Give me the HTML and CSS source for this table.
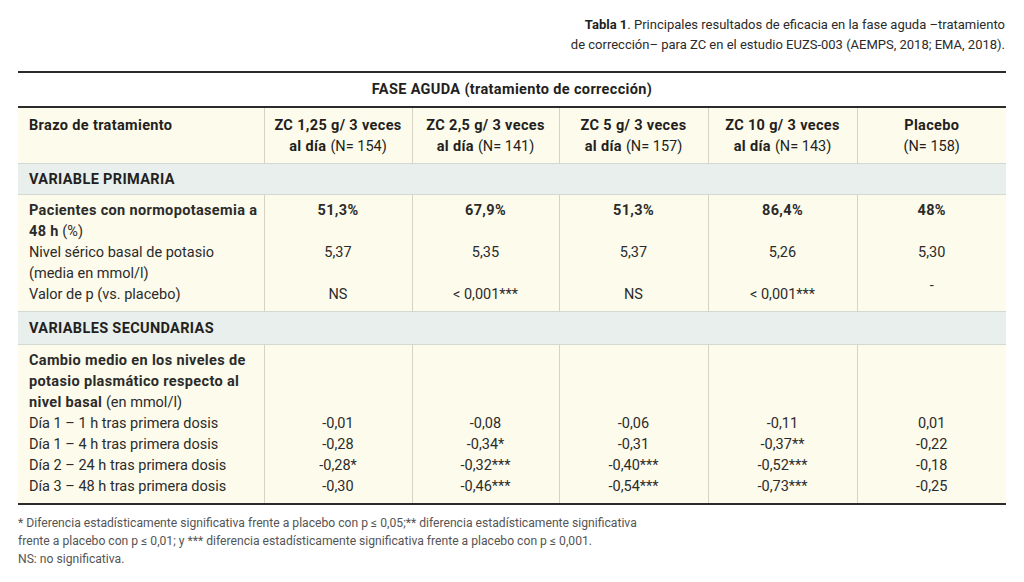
FILE: index.html
```html
<!DOCTYPE html>
<html lang="es">
<head>
<meta charset="utf-8">
<title>Tabla 1</title>
<link rel="stylesheet" href="styles.css">
</head>
<body>
<div class="page">
  <p class="caption"><b>Tabla 1</b>. Principales resultados de eficacia en la fase aguda –tratamiento<br>de corrección– para ZC en el estudio EUZS-003 (AEMPS, 2018; EMA, 2018).</p>

  <table class="results">
    <colgroup>
      <col class="c-label"><col class="c-a"><col class="c-b"><col class="c-c"><col class="c-d"><col class="c-e">
    </colgroup>
    <thead>
      <tr class="phase"><th colspan="6">FASE AGUDA (tratamiento de corrección)</th></tr>
      <tr class="head">
        <th class="lbl">Brazo de tratamiento</th>
        <th class="val">ZC 1,25 g/ 3 veces<br>al día <span class="reg">(N= 154)</span></th>
        <th class="val">ZC 2,5 g/ 3 veces<br>al día <span class="reg">(N= 141)</span></th>
        <th class="val">ZC 5 g/ 3 veces<br>al día <span class="reg">(N= 157)</span></th>
        <th class="val">ZC 10 g/ 3 veces<br>al día <span class="reg">(N= 143)</span></th>
        <th class="val">Placebo<br><span class="reg">(N= 158)</span></th>
      </tr>
    </thead>
    <tbody>
      <tr class="section"><td colspan="6">VARIABLE PRIMARIA</td></tr>
      <tr class="first">
        <td class="lbl"><b>Pacientes con normopotasemia a<br>48 h</b> (%)</td>
        <td class="val"><b>51,3%</b></td>
        <td class="val"><b>67,9%</b></td>
        <td class="val"><b>51,3%</b></td>
        <td class="val"><b>86,4%</b></td>
        <td class="val"><b>48%</b></td>
      </tr>
      <tr>
        <td class="lbl">Nivel sérico basal de potasio<br>(media en mmol/l)</td>
        <td class="val">5,37</td>
        <td class="val">5,35</td>
        <td class="val">5,37</td>
        <td class="val">5,26</td>
        <td class="val">5,30</td>
      </tr>
      <tr class="last">
        <td class="lbl">Valor de p (vs. placebo)</td>
        <td class="val">NS</td>
        <td class="val">&lt; 0,001***</td>
        <td class="val">NS</td>
        <td class="val">&lt; 0,001***</td>
        <td class="val"><span class="raised">-</span></td>
      </tr>
      <tr class="section tall"><td colspan="6">VARIABLES SECUNDARIAS</td></tr>
      <tr class="first">
        <td class="lbl"><b>Cambio medio en los niveles de<br>potasio plasmático respecto al<br>nivel basal</b> (en mmol/l)</td>
        <td class="val"></td><td class="val"></td><td class="val"></td><td class="val"></td><td class="val"></td>
      </tr>
      <tr>
        <td class="lbl">Día 1 – 1 h tras primera dosis</td>
        <td class="val">-0,01</td><td class="val">-0,08</td><td class="val">-0,06</td><td class="val">-0,11</td><td class="val">0,01</td>
      </tr>
      <tr>
        <td class="lbl">Día 1 – 4 h tras primera dosis</td>
        <td class="val">-0,28</td><td class="val">-0,34*</td><td class="val">-0,31</td><td class="val">-0,37**</td><td class="val">-0,22</td>
      </tr>
      <tr>
        <td class="lbl">Día 2 – 24 h tras primera dosis</td>
        <td class="val">-0,28*</td><td class="val">-0,32***</td><td class="val">-0,40***</td><td class="val">-0,52***</td><td class="val">-0,18</td>
      </tr>
      <tr class="last">
        <td class="lbl">Día 3 – 48 h tras primera dosis</td>
        <td class="val">-0,30</td><td class="val">-0,46***</td><td class="val">-0,54***</td><td class="val">-0,73***</td><td class="val">-0,25</td>
      </tr>
    </tbody>
  </table>

  <p class="notes">* Diferencia estadísticamente significativa frente a placebo con p ≤ 0,05;** diferencia estadísticamente significativa<br>frente a placebo con p ≤ 0,01; y *** diferencia estadísticamente significativa frente a placebo con p ≤ 0,001.<br>NS: no significativa.</p>
</div>
</body>
</html>
```

FILE: styles.css
```css
html, body {
  margin: 0;
  padding: 0;
  background: #ffffff;
}

.page {
  width: 1024px;
  height: 582px;
  overflow: hidden;
  padding: 15px 18px 0 18px;
  box-sizing: border-box;
  font-family: Roboto, "Liberation Sans", sans-serif;
  color: #231f20;
}

.caption {
  margin: 0;
  text-align: right;
  font-size: 13px;
  line-height: 20px;
  color: #2a2a2a;
  padding-right: 1px;
}

.caption b {
  font-weight: 700;
  color: #1e1e1e;
}

.results {
  margin-top: 16px;
  width: 988px;
  border-collapse: collapse;
  table-layout: fixed;
  font-size: 14.5px;
  line-height: 21px;
}

.results b,
.results th,
.section td {
  letter-spacing: 0.35px;
}

.results .reg {
  font-weight: 400;
  letter-spacing: 0;
}

.c-label { width: 246px; }
.c-a { width: 148px; }
.c-b { width: 147px; }
.c-c { width: 149px; }
.c-d { width: 149px; }
.c-e { width: 149px; }

.results th,
.results td {
  padding: 0;
  vertical-align: top;
}

.phase th {
  border-top: 2px solid #2b2b2b;
  border-bottom: 2px solid #2b2b2b;
  height: 33px;
  vertical-align: middle;
  text-align: center;
  font-weight: 700;
  background: #ffffff;
}

.head th {
  background: #fdfbec;
  font-weight: 700;
  padding-top: 7px;
  padding-bottom: 6px;
}

.lbl {
  text-align: left;
  padding-left: 11px !important;
  padding-right: 4px !important;
  white-space: nowrap;
}

.val {
  text-align: center;
  border-left: 1px solid #d6d3c4;
}

tbody tr td {
  background: #fdfbec;
  color: #2b2b2b;
}

.first td {
  padding-top: 5px;
}

.last td {
  padding-bottom: 6px;
}

.section td {
  background: #e8efec;
  border-top: 1px solid #d3d8d4;
  border-bottom: 1px solid #d3d8d4;
  height: 31px;
  box-sizing: border-box;
  vertical-align: middle;
  padding-left: 11px;
  font-weight: 700;
  color: #231f20;
}

.section.tall td {
  height: 33px;
}

.results tbody tr:last-child td {
  border-bottom: 2px solid #2b2b2b;
}

.raised {
  vertical-align: 9px;
  line-height: 0;
}

.notes {
  margin: 9px 0 0 0;
  font-size: 12.15px;
  line-height: 18px;
  color: #555555;
}
```
